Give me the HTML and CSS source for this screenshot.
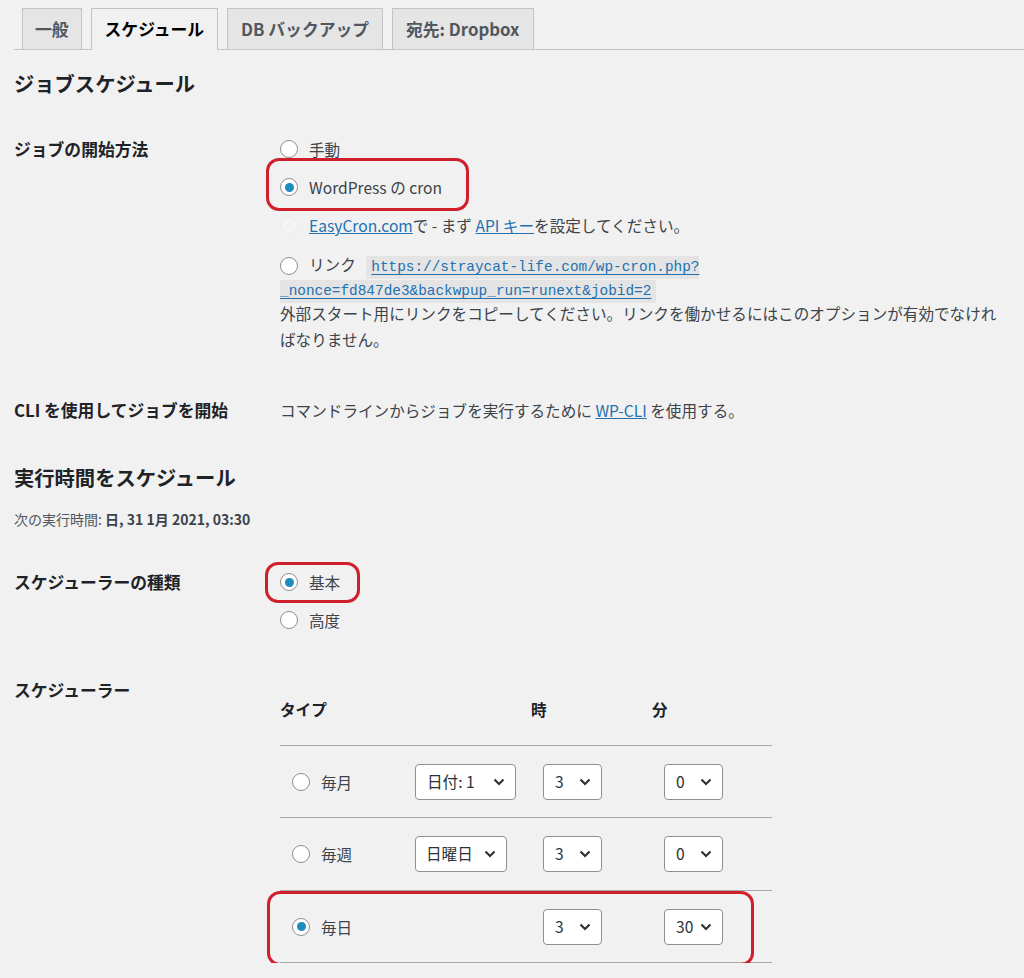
FILE: index.html
```html
<!DOCTYPE html>
<html lang="ja">
<head>
<meta charset="utf-8">
<title>BackWPup ジョブ - スケジュール</title>
<link rel="stylesheet" href="styles.css">
</head>
<body>
<div class="wrap">
  <nav class="tabs">
    <a class="tab">一般</a>
    <a class="tab active">スケジュール</a>
    <a class="tab">DB バックアップ</a>
    <a class="tab">宛先: Dropbox</a>
  </nav>

  <h2 class="section-title title-first">ジョブスケジュール</h2>

  <div class="form-row row-start">
    <div class="label label-tall">ジョブの開始方法</div>
    <div class="field">
      <div class="opt"><span class="radio"></span>手動</div>
      <div class="opt hl hl-cron"><span class="radio checked"></span>WordPress の cron</div>
      <div class="opt"><span class="radio disabled"></span><a class="link">EasyCron.com</a>で - まず&nbsp;<a class="link">API キー</a>を設定してください。</div>
      <p class="link-line"><span class="radio inline"></span>リンク <code class="url"><a class="link">https://straycat-life.com/wp-cron.php?<wbr>_nonce=fd847de3&amp;backwpup_run=runext&amp;jobid=2</a></code></p>
      <p class="desc">外部スタート用にリンクをコピーしてください。リンクを働かせるにはこのオプションが有効でなければなりません。</p>
    </div>
  </div>

  <div class="form-row row-cli">
    <div class="label">CLI を使用してジョブを開始</div>
    <div class="field text-line">コマンドラインからジョブを実行するために <a class="link">WP-CLI</a> を使用する。</div>
  </div>

  <h2 class="section-title title-second">実行時間をスケジュール</h2>
  <p class="next-run">次の実行時間: <b>日, 31 1月 2021, 03:30</b></p>

  <div class="form-row row-kind">
    <div class="label label-tall">スケジューラーの種類</div>
    <div class="field">
      <div class="opt hl hl-basic"><span class="radio checked"></span>基本</div>
      <div class="opt"><span class="radio"></span>高度</div>
    </div>
  </div>

  <div class="form-row row-sched">
    <div class="label">スケジューラー</div>
    <div class="field">
      <div class="sched">
        <div class="sched-row sched-head">
          <div class="th">タイプ</div>
          <div class="th"></div>
          <div class="th">時</div>
          <div class="th">分</div>
        </div>
        <div class="sched-row body-row row-h71">
          <div class="td"><span class="radio"></span>毎月</div>
          <div class="td"><span class="select w-day">日付: 1<svg class="chev" viewBox="0 0 12 8"><path d="M1.5 1.5 6 6l4.5-4.5"/></svg></span></div>
          <div class="td"><span class="select w-num">3<svg class="chev" viewBox="0 0 12 8"><path d="M1.5 1.5 6 6l4.5-4.5"/></svg></span></div>
          <div class="td"><span class="select w-num">0<svg class="chev" viewBox="0 0 12 8"><path d="M1.5 1.5 6 6l4.5-4.5"/></svg></span></div>
        </div>
        <div class="sched-row body-row row-h72">
          <div class="td"><span class="radio"></span>毎週</div>
          <div class="td"><span class="select w-week">日曜日<svg class="chev" viewBox="0 0 12 8"><path d="M1.5 1.5 6 6l4.5-4.5"/></svg></span></div>
          <div class="td"><span class="select w-num">3<svg class="chev" viewBox="0 0 12 8"><path d="M1.5 1.5 6 6l4.5-4.5"/></svg></span></div>
          <div class="td"><span class="select w-num">0<svg class="chev" viewBox="0 0 12 8"><path d="M1.5 1.5 6 6l4.5-4.5"/></svg></span></div>
        </div>
        <div class="sched-row body-row row-h71 hl hl-daily">
          <div class="td"><span class="radio checked"></span>毎日</div>
          <div class="td"></div>
          <div class="td"><span class="select w-num">3<svg class="chev" viewBox="0 0 12 8"><path d="M1.5 1.5 6 6l4.5-4.5"/></svg></span></div>
          <div class="td"><span class="select w-num">30<svg class="chev" viewBox="0 0 12 8"><path d="M1.5 1.5 6 6l4.5-4.5"/></svg></span></div>
        </div>
      </div>
    </div>
  </div>
</div>
</body>
</html>
```

FILE: styles.css
```css
html, body {
  margin: 0;
  padding: 0;
  background: #f1f1f1;
}

body {
  font-family: "Noto Sans CJK JP", "Noto Sans", sans-serif;
  font-size: 15.6px;
  color: #3c434a;
}

.wrap {
  padding: 0 16px 0 14px;
}

/* Tabs */
.tabs {
  display: flex;
  align-items: flex-end;
  padding-top: 8px;
  height: 41px;
  border-bottom: 1px solid #c3c4c7;
  margin-right: -16px;
}

.tab {
  box-sizing: border-box;
  height: 41px;
  line-height: 40px;
  padding: 0 13px;
  margin-left: 9px;
  font-size: 16.8px;
  font-weight: 700;
  color: #50575e;
  background: #e5e5e5;
  border: 1px solid #c3c4c7;
  border-bottom: none;
}

.tab:first-child {
  margin-left: 8px;
  padding: 0 12px;
}

.tab.active {
  height: 42px;
  margin-bottom: -1px;
  background: #f1f1f1;
  color: #000;
}

/* Headings */
.section-title {
  margin: 0;
  font-size: 20.3px;
  line-height: 28px;
  font-weight: 700;
  color: #1d2327;
}

.title-first {
  margin-top: 19px;
}

.title-second {
  margin-top: 40px;
}

.next-run {
  margin: 17px 0 0;
  font-size: 14px;
  line-height: 22px;
  color: #50575e;
}

.next-run b {
  color: #3c434a;
}

/* Form rows */
.form-row {
  display: grid;
  grid-template-columns: 266px 1fr;
}

.row-start {
  margin-top: 33px;
}

.row-cli {
  margin-top: 45px;
}

.row-kind {
  margin-top: 33px;
}

.row-sched {
  margin-top: 38px;
}

.label {
  font-size: 16.8px;
  font-weight: 700;
  color: #1d2327;
  line-height: 26px;
}

.label-tall {
  line-height: 38px;
}

.text-line {
  line-height: 26px;
}

.opt {
  position: relative;
  display: flex;
  align-items: center;
  height: 38px;
  line-height: 26px;
}

.link {
  color: #2271b1;
  text-decoration: underline;
}

/* Radios */
.radio {
  box-sizing: border-box;
  width: 18px;
  height: 18px;
  flex: none;
  border: 1px solid #8c8f94;
  border-radius: 50%;
  background: #fff;
  display: inline-flex;
  align-items: center;
  justify-content: center;
  margin-right: 11px;
}

.radio.checked::before {
  content: "";
  width: 9px;
  height: 9px;
  border-radius: 50%;
  background: #1e8cbe;
}

.radio.disabled {
  border-color: #ececec;
  background: #f4f4f4;
}

.radio.inline {
  vertical-align: -4px;
}

.link-line {
  margin: 8px 0 0;
  line-height: 24px;
}

.url {
  font-family: "Liberation Mono", monospace;
  font-size: 14.4px;
  line-height: 1;
  background: #e4e4e4;
  padding: 3px 5px 4px 5px;
  margin-left: 7px;
  -webkit-box-decoration-break: slice;
  box-decoration-break: slice;
}

.url .link {
  text-underline-offset: 3px;
}

.desc {
  margin: 0;
  line-height: 26px;
}

/* Highlight boxes */
.hl {
  position: relative;
}

.hl::after {
  content: "";
  position: absolute;
  box-sizing: border-box;
  border: 3px solid #d0202c;
  border-radius: 13px;
  pointer-events: none;
}

.hl-cron::after {
  left: -14px;
  top: -10px;
  width: 203px;
  height: 53px;
}

.hl-basic::after {
  left: -15px;
  top: -1px;
  width: 95px;
  height: 41px;
}

.hl-daily::after {
  left: -13px;
  top: 0;
  width: 487px;
  height: 75px;
}

/* Scheduler table */
.sched {
  width: 492px;
}

.sched-row {
  display: grid;
  grid-template-columns: 123px 128px 121px 120px;
  border-bottom: 1px solid #a7aaad;
  align-items: center;
}

.sched-head .th {
  padding: 19px 0 23px;
  line-height: 26px;
  font-weight: 700;
  color: #1d2327;
}

.row-h71 {
  height: 71px;
}

.row-h72 {
  height: 72px;
}

.body-row .td {
  display: flex;
  align-items: center;
  padding-left: 12px;
}

.select {
  box-sizing: border-box;
  display: inline-flex;
  align-items: center;
  justify-content: space-between;
  height: 36px;
  padding: 0 10px 0 11px;
  border: 1px solid #8c8f94;
  border-radius: 4px;
  background: #fff;
  color: #2c3338;
  line-height: 1;
}

.w-day {
  width: 101px;
}

.w-week {
  width: 92px;
  padding-left: 10px;
}

.w-num {
  width: 59px;
}

.chev {
  width: 12px;
  height: 8px;
  fill: none;
  stroke: #2c3338;
  stroke-width: 2.2;
}
```
